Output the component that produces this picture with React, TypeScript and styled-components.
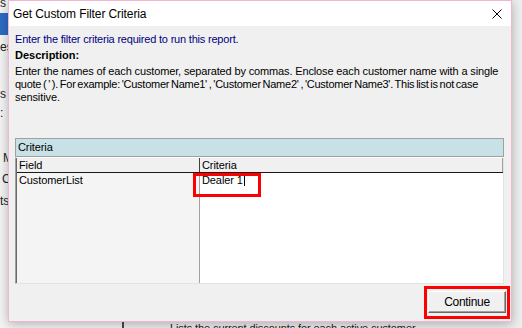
import styled, { createGlobalStyle } from "styled-components";

const GlobalStyle = createGlobalStyle`
  html, body {
    margin: 0;
    padding: 0;
  }
  body {
    width: 522px;
    height: 328px;
    overflow: hidden;
    background: #f0f0f0;
    font-family: "Liberation Sans", Arial, sans-serif;
  }
`;

const sideItems = [
  { text: "s", gap: -4, indent: 0 },
  { text: "", gap: 3, indent: 0, selected: true },
  { text: "es", gap: 5, indent: 0 },
  { text: "s", gap: 33, indent: 0 },
  { text: ":", gap: 5, indent: 0 },
  { text: "M", gap: 31, indent: 3 },
  { text: "C", gap: 7, indent: 2 },
  { text: "ts", gap: 8, indent: 0 },
];

// the description wraps at fixed points in the original dialog
const descriptionLines = [
  {
    text: "Enter the names of each customer, separated by commas. Enclose each customer name with a single",
    letter: -0.14,
    word: 0,
  },
  {
    text: "quote ( ' ). For example: 'Customer Name1' , 'Customer Name2' , 'Customer Name3'. This list is not case",
    letter: -0.26,
    word: -1,
  },
  { text: "sensitive.", letter: -0.1, word: 0 },
];

const App = () => {
  return (
    <>
      <GlobalStyle />
      <Desktop>
        <BackApp>
          <Sidebar>
            {sideItems.map((item, i) => (
              <SideItem
                key={i}
                $gap={item.gap}
                $indent={item.indent}
                $selected={!!item.selected}
              >
                {item.text}
              </SideItem>
            ))}
          </Sidebar>
          <MainPane>
            <ReportLine>
              Lists the current discounts for each active customer.
            </ReportLine>
          </MainPane>
        </BackApp>

        <Dialog>
          <TitleBar>
            <Title>Get Custom Filter Criteria</Title>
            <CloseButton>
              <svg width="10" height="10" viewBox="0 0 10 10">
                <path
                  d="M0.5 0.5 L9.5 9.5 M9.5 0.5 L0.5 9.5"
                  stroke="#000"
                  strokeWidth="1"
                  fill="none"
                />
              </svg>
            </CloseButton>
          </TitleBar>

          <Content>
            <Prompt>Enter the filter criteria required to run this report.</Prompt>
            <Heading>Description:</Heading>
            <Body>
              {descriptionLines.map((line, i) => (
                <BodyLine key={i} $letter={line.letter} $word={line.word}>
                  {line.text}
                </BodyLine>
              ))}
            </Body>

            <PanelHeader>Criteria</PanelHeader>
            <Grid>
              <HeaderRow>
                <HeaderCell $divider>Field</HeaderCell>
                <HeaderCell>Criteria</HeaderCell>
              </HeaderRow>
              <BodyRow>
                <FieldCell>CustomerList</FieldCell>
                <ValueCell>
                  Dealer 1<Caret />
                  <Highlight />
                </ValueCell>
              </BodyRow>
            </Grid>
          </Content>

          <Footer>
            <ButtonHighlight>
              <Button>Continue</Button>
            </ButtonHighlight>
          </Footer>
        </Dialog>
      </Desktop>
    </>
  );
};

export default App;

const Desktop = styled.div`
  position: relative;
  width: 522px;
  height: 328px;
  overflow: hidden;
  background: #f0f0f0;
`;

const BackApp = styled.div`
  display: flex;
  height: 100%;
`;

const Sidebar = styled.div`
  width: 122px;
  border-right: 2px solid #4a4a4a;
  background: #f4f4f4;
  display: flex;
  flex-direction: column;
  font-size: 12px;
  color: #222;
`;

const SideItem = styled.div<{ $gap: number; $indent: number; $selected: boolean }>`
  margin-top: ${(p) => p.$gap}px;
  padding-left: ${(p) => p.$indent}px;
  height: ${(p) => (p.$selected ? 22 : 14)}px;
  line-height: 14px;
  background: ${(p) => (p.$selected ? "#2d6bc3" : "transparent")};
  white-space: nowrap;
`;

const MainPane = styled.div`
  flex: 1;
  background: #eeeeee;
  padding: 322px 0 0 46px;
`;

const ReportLine = styled.div`
  font-size: 11px;
  line-height: 13px;
  letter-spacing: -0.1px;
  color: #222;
  white-space: nowrap;
`;

const Dialog = styled.div`
  position: absolute;
  left: 8px;
  top: 0;
  width: 504px;
  height: 322px;
  box-sizing: border-box;
  border: 1px solid #f1b6d2;
  background: #f0f0f0;
  box-shadow: 0 2px 10px rgba(0, 0, 0, 0.28);
  display: flex;
  flex-direction: column;
`;

const TitleBar = styled.div`
  height: 25px;
  background: #ffffff;
  display: flex;
  align-items: center;
  justify-content: space-between;
  padding: 0 9px 0 4px;
`;

const Title = styled.div`
  font-size: 12px;
  letter-spacing: -0.1px;
  color: #000;
`;

const CloseButton = styled.div`
  width: 10px;
  height: 10px;
  display: flex;
`;

const Content = styled.div`
  flex: 1;
  display: flex;
  flex-direction: column;
  padding: 7px 7px 0 6px;
  font-size: 11px;
  line-height: 13px;
  letter-spacing: -0.1px;
  color: #000;
`;

const Prompt = styled.div`
  color: #000080;
  letter-spacing: -0.2px;
`;

const Heading = styled.div`
  margin-top: 3px;
  font-weight: bold;
  letter-spacing: 0;
`;

const Body = styled.div`
  margin-top: 3px;
  display: flex;
  flex-direction: column;
`;

const BodyLine = styled.div<{ $letter: number; $word: number }>`
  white-space: nowrap;
  letter-spacing: ${(p) => p.$letter}px;
  word-spacing: ${(p) => p.$word}px;
`;

const PanelHeader = styled.div`
  margin-top: 34px;
  height: 17px;
  line-height: 17px;
  border: 1px solid #a0a0a0;
  background: #c8e1e6;
  padding-left: 2px;
`;

const Grid = styled.div`
  flex: 1;
  display: flex;
  flex-direction: column;
  border-top: 1px solid #ffffff;
  border-left: 1px solid #a0a0a0;
  border-right: 1px solid #e3e3e3;
  border-bottom: 1px solid #e3e3e3;
  box-shadow: inset 1px 0 0 #696969;
`;

const HeaderRow = styled.div`
  display: grid;
  grid-template-columns: 183px 1fr;
  height: 14px;
  border-bottom: 1px solid #1a1a1a;
  background: #f0f0f0;
  margin-left: 1px;
`;

const HeaderCell = styled.div<{ $divider?: boolean }>`
  padding-left: 2px;
  line-height: 14px;
  border-right: 1px solid ${(p) => (p.$divider ? "#404040" : "#a0a0a0")};
`;

const BodyRow = styled.div`
  flex: 1;
  display: grid;
  grid-template-columns: 183px 1fr;
  margin-left: 1px;
`;

const FieldCell = styled.div`
  background: #f4f4f4;
  border-right: 1px solid #a0a0a0;
  padding: 1px 0 0 2px;
`;

const ValueCell = styled.div`
  position: relative;
  background: #ffffff;
  padding: 1px 0 0 2px;
`;

const Caret = styled.span`
  display: inline-block;
  width: 1px;
  height: 12px;
  margin-left: 1px;
  background: #000;
  vertical-align: -2px;
`;

const Highlight = styled.div`
  position: absolute;
  left: -7px;
  top: 0;
  width: 68px;
  height: 24px;
  box-sizing: border-box;
  border: 3px solid #ff0000;
`;

const Footer = styled.div`
  height: 37px;
  display: flex;
  justify-content: flex-end;
  align-items: flex-start;
  padding: 2px 1px 0 0;
  box-sizing: border-box;
`;

const ButtonHighlight = styled.div`
  display: flex;
  border: 3px solid #ff0000;
  padding: 2px 1px 3px 1px;
`;

const Button = styled.div`
  width: 76px;
  height: 20px;
  display: flex;
  align-items: center;
  justify-content: center;
  background: #f0f0f0;
  border: 1px solid;
  border-color: #ffffff #696969 #696969 #ffffff;
  box-shadow: inset -1px -1px 0 #a0a0a0;
  font-size: 12px;
  letter-spacing: -0.3px;
  color: #000;
`;
